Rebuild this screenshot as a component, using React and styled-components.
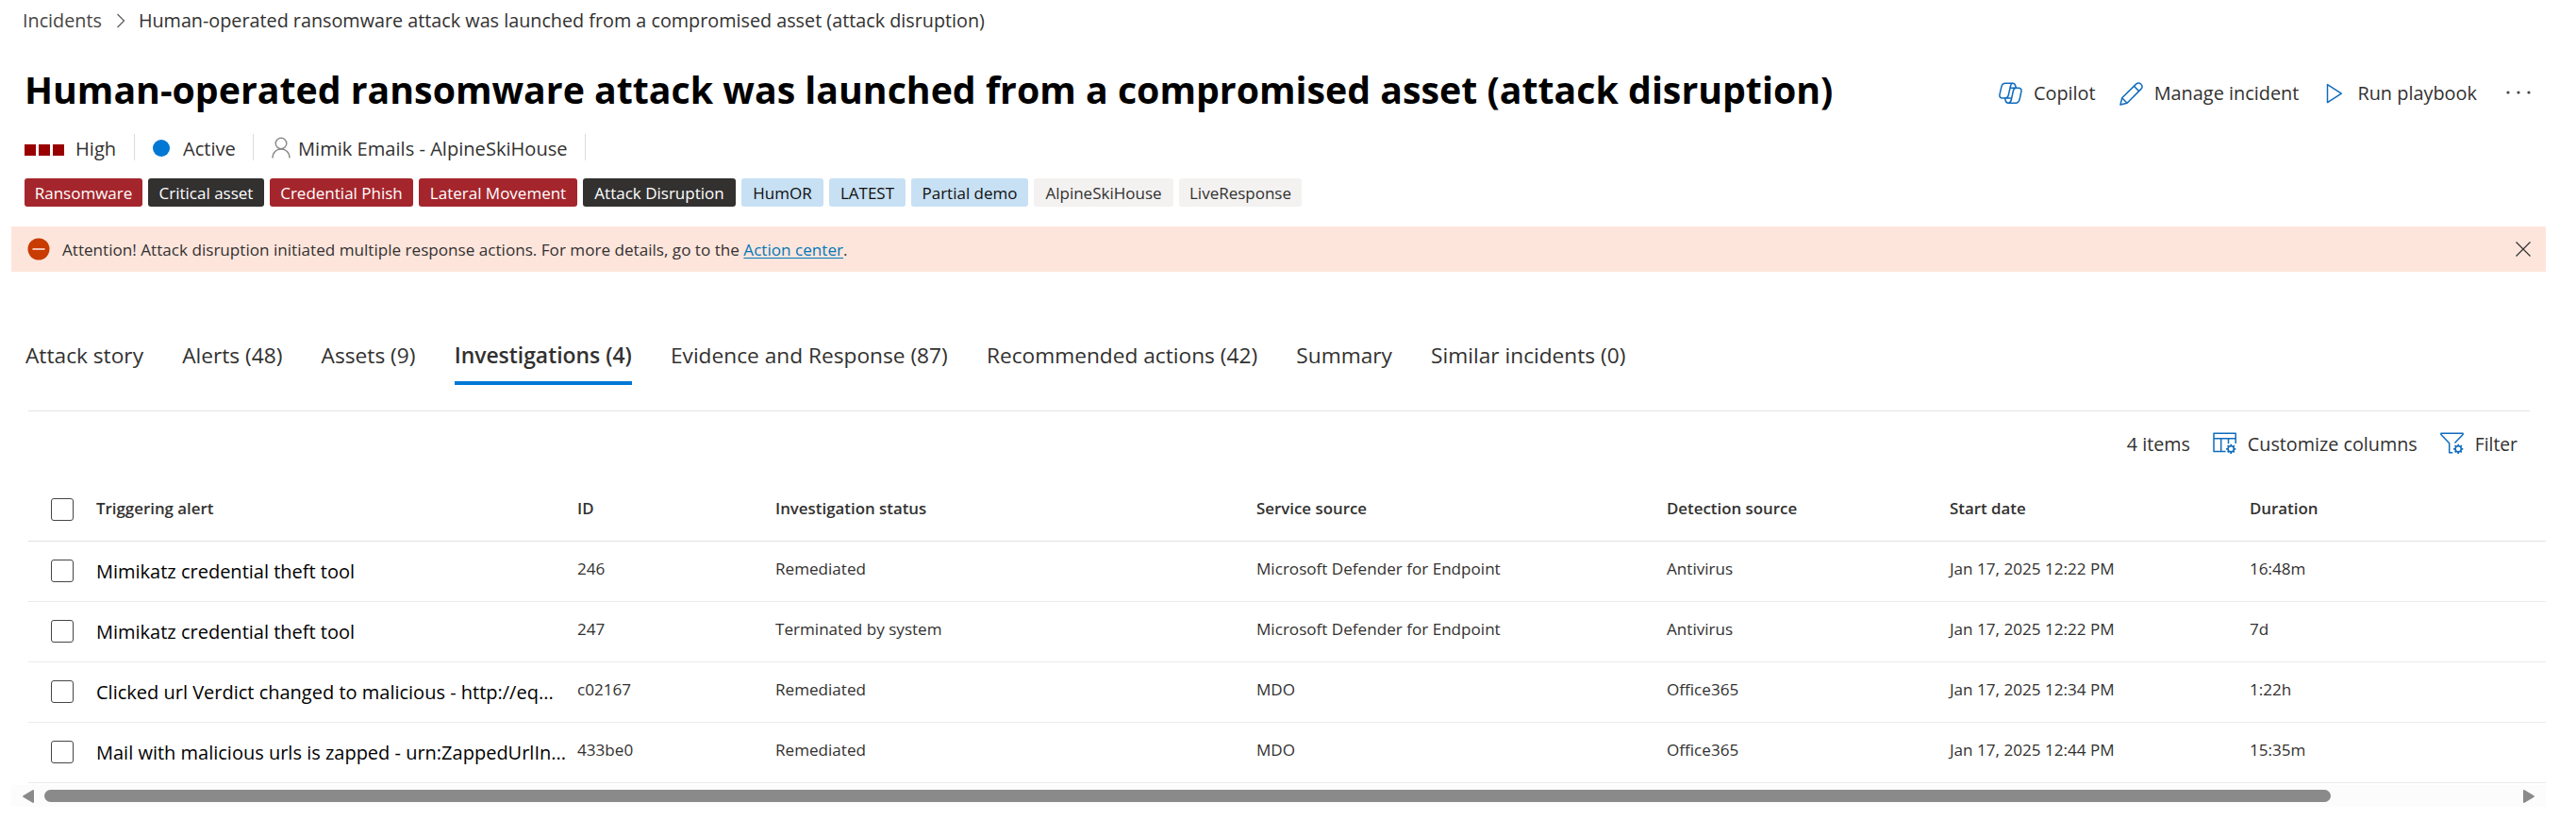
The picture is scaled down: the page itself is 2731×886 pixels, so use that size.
import React from "react";
import styled, { createGlobalStyle } from "styled-components";

const GlobalStyle = createGlobalStyle`
  body { margin: 0; background: #fff; color: #323130; font-family: "Open Sans", "Noto Sans", sans-serif; }
  * { box-sizing: border-box; }
`;

const Page = styled.main`
  width: 2731px;
  height: 886px;
  overflow: hidden;
  display: flex;
  flex-direction: column;
  white-space: nowrap;
`;

const Breadcrumb = styled.nav`
  display: flex;
  align-items: center;
  height: 44px;
  padding: 0 0 0 24px;
  font-size: 19.77px;
  line-height: 44px;
`;
const Crumb = styled.span`
  color: ${(p) => (p.$current ? "#323130" : "#484644")};
`;
const CrumbChevron = styled.svg`
  width: 10px;
  height: 16px;
  margin: 0 14px 0 15px;
  fill: none;
  stroke: #605e5c;
  stroke-width: 1.3;
`;

const TitleBar = styled.header`
  display: flex;
  align-items: center;
  height: 96px;
  padding: 4px 48px 0 26px;
`;
const Title = styled.h1`
  flex: 1;
  margin: 2px 0 0;
  color: #000;
  font-size: 39.27px;
  font-weight: 700;
  line-height: 54px;
`;
const Actions = styled.div`
  display: flex;
  align-items: center;
  padding-top: 10px;
`;
const Action = styled.button`
  display: flex;
  align-items: center;
  gap: ${(p) => p.$gap}px;
  margin: 0 0 0 ${(p) => p.$before}px;
  padding: 0;
  border: 0;
  background: none;
  color: #323130;
  font: inherit;
  font-size: ${(p) => p.$size || 19.9}px;
  line-height: 30px;
`;
const LineIcon = styled.svg`
  flex: none;
  width: ${(p) => p.$w || 25}px;
  height: 25px;
  fill: none;
  stroke: #0f6cbd;
  stroke-width: 1.5;
  stroke-linejoin: round;
`;
const MoreDots = styled.svg`
  width: 26px;
  height: 6px;
  margin-left: 31px;
  fill: #484644;
`;

const MetaRow = styled.div`
  display: flex;
  align-items: center;
  height: 30px;
  margin-top: 1px;
  padding: 0 25px;
  font-size: 20.1px;
  line-height: 30px;
`;
const MetaItem = styled.div`
  display: flex;
  align-items: center;
  width: ${(p) => p.$w}px;
  height: 28px;
  border-right: 1px solid #dcdbda;
`;
const MetaText = styled.span`
  padding-top: 3px;
`;
const SeverityBars = styled.span`
  display: flex;
  gap: 3px;
  margin: 6px 12px 0 1px;
`;
const SeverityBar = styled.i`
  width: 12px;
  height: 12px;
  background: #990000;
`;
const StatusDot = styled.i`
  width: 18px;
  height: 18px;
  margin: 2px 14px 0 19px;
  border-radius: 50%;
  background: #0078d4;
`;
const PersonIcon = styled.svg`
  width: 20px;
  height: 23px;
  margin: 0 8px 0 19px;
  fill: none;
  stroke: #8a8886;
  stroke-width: 1.4;
`;

const TagRow = styled.div`
  display: flex;
  gap: 6px;
  height: 30px;
  margin-top: 18px;
  padding-left: 26px;
`;
const tagTones = {
  danger: ["#a4262c", "#fff"],
  dark: ["#323130", "#fff"],
  info: ["#c7e0f4", "#11100f"],
  plain: ["#f3f2f1", "#323130"],
};
const Tag = styled.span`
  width: ${(p) => p.$w}px;
  border-radius: 3px;
  background: ${(p) => tagTones[p.$tone][0]};
  color: ${(p) => tagTones[p.$tone][1]};
  font-size: 17px;
  line-height: 31px;
  text-align: center;
`;

const Banner = styled.div`
  display: flex;
  align-items: center;
  height: 48px;
  margin: 21px 32px 0 12px;
  padding: 0 16px 0 17px;
  background: #fee5dc;
  font-size: 17.13px;
  line-height: 48px;
`;
const BannerIcon = styled.svg`
  width: 24px;
  height: 24px;
  margin: 0 13px 0 0;
`;
const BannerText = styled.span`
  flex: 1;
  padding-top: 1px;
`;
const BannerLink = styled.a`
  color: #0078b8;
  text-decoration: underline;
  text-underline-offset: 2px;
  text-decoration-thickness: 1px;
`;
const CloseIcon = styled.svg`
  width: 16px;
  height: 16px;
  stroke: #323130;
  stroke-width: 1.2;
`;

const TabStrip = styled.section`
  margin: 0 49px 0 30px;
  border-bottom: 1px solid #e3e2e1;
`;
const Tabs = styled.div`
  display: flex;
  gap: 41.2px;
  height: 78px;
  margin: 69px 0 0 -3px;
`;
const Tab = styled.button`
  height: 51px;
  padding: 0 0 7px;
  border: 0;
  border-bottom: 4px solid ${(p) => (p.$active ? "#0078d4" : "transparent")};
  background: none;
  color: #323130;
  font: inherit;
  font-size: ${(p) => (p.$active ? 22.9 : 22.7)}px;
  font-weight: ${(p) => (p.$active ? 600 : 400)};
  line-height: 40px;
`;

const Toolbar = styled.div`
  display: flex;
  align-items: center;
  justify-content: flex-end;
  height: 68px;
  padding: 1px 62px 0 0;
  font-size: 19.7px;
`;

const Table = styled.div`
  width: 2669px;
  margin-left: 30px;
`;
const Row = styled.div`
  display: grid;
  grid-template-columns: 72px 510px 210px 510px 435px 300px 318px 314px;
  align-items: center;
  height: ${(p) => (p.$head ? 70 : 64)}px;
  border-bottom: 1px solid ${(p) => (p.$head ? "#e1dfdd" : "#edebe9")};
`;
const Check = styled.span`
  width: 24px;
  height: 24px;
  margin: ${(p) => (p.$head ? "3px 0 0" : "0 0 1px")} 24px;
  border: 1.4px solid #484644;
  border-radius: 3px;
`;
const HeadCell = styled.span`
  padding-top: 1px;
  font-size: 16.87px;
  font-weight: 600;
  line-height: 26px;
`;
const AlertName = styled.span`
  width: 499px;
  overflow: hidden;
  color: #000;
  font-size: 20px;
  line-height: 30px;
  padding-top: 1px;
`;
const Cell = styled.span`
  margin-bottom: 6px;
  font-size: 17.1px;
  line-height: 26px;
`;

const Scrollbar = styled.div`
  display: flex;
  align-items: center;
  height: 23px;
  margin: 2px 32px 0 12px;
  padding: 0 12px;
  background: #fcfcfc;
`;
const ScrollArrow = styled.svg`
  width: 12px;
  height: 14px;
  fill: #8a8a8a;
`;
const ScrollTrack = styled.div`
  flex: 1;
  padding-left: 11px;
`;
const ScrollThumb = styled.div`
  width: 2424px;
  height: 13px;
  border-radius: 6.5px;
  background: #8a8a8a;
`;

const GearMark = () => (
  <g>
    <circle cx="19.2" cy="17.8" r="3.1" strokeWidth="1.6" />
    <path strokeWidth="1.7" d="M19.2 12.7v2M19.2 20.900v2M24.3 17.8h-2M16.1 17.8h-2M22.8 14.200l-1.400 1.400M17 20l-1.400 1.400M22.8 21.400l-1.400-1.400M17 15.600l-1.400-1.400" />
  </g>
);

const tags = [
  ["Ransomware", "danger", 125],
  ["Critical asset", "dark", 123],
  ["Credential Phish", "danger", 152],
  ["Lateral Movement", "danger", 168],
  ["Attack Disruption", "dark", 162],
  ["HumOR", "info", 87],
  ["LATEST", "info", 81],
  ["Partial demo", "info", 124],
  ["AlpineSkiHouse", "plain", 148],
  ["LiveResponse", "plain", 130],
];
const tabs = [
  "Attack story",
  "Alerts (48)",
  "Assets (9)",
  "Investigations (4)",
  "Evidence and Response (87)",
  "Recommended actions (42)",
  "Summary",
  "Similar incidents (0)",
];
const heads = ["Triggering alert", "ID", "Investigation status", "Service source", "Detection source", "Start date", "Duration"];
const rows = [
  ["Mimikatz credential theft tool", "246", "Remediated", "Microsoft Defender for Endpoint", "Antivirus", "Jan 17, 2025 12:22 PM", "16:48m"],
  ["Mimikatz credential theft tool", "247", "Terminated by system", "Microsoft Defender for Endpoint", "Antivirus", "Jan 17, 2025 12:22 PM", "7d"],
  ["Clicked url Verdict changed to malicious - http://eq...", "c02167", "Remediated", "MDO", "Office365", "Jan 17, 2025 12:34 PM", "1:22h"],
  ["Mail with malicious urls is zapped - urn:ZappedUrlIn...", "433be0", "Remediated", "MDO", "Office365", "Jan 17, 2025 12:44 PM", "15:35m"],
];

export default function App() {
  return (
    <Page>
      <GlobalStyle />
      <Breadcrumb>
        <Crumb>Incidents</Crumb>
        <CrumbChevron viewBox="0 0 10 16"><path d="M1.5 1l7 7-7 7" /></CrumbChevron>
        <Crumb $current>Human-operated ransomware attack was launched from a compromised asset (attack disruption)</Crumb>
      </Breadcrumb>

      <TitleBar>
        <Title>Human-operated ransomware attack was launched from a compromised asset (attack disruption)</Title>
        <Actions>
          <Action $gap={12} $before={0}>
            <LineIcon viewBox="0 0 25 25">
              <path d="M7 17H4C1.600 17 .6 15.500 1 13.200L2.900 4.800C3.500 2.200 4.700 1.200 7.200 1.200H14.800C16.800 1.200 17.400 2.300 17.800 4L18.300 6.200" />
              <path d="M16.500 6.200H20.800C23.300 6.200 24.400 7.600 23.900 10L22.200 18C21.600 20.800 20.300 22.200 17.800 22.200H10.200C8.200 22.200 7.600 21.200 7.200 19.500L6.600 17" />
              <path d="M14.500 1.300C13 1.700 12.700 3 12.400 4.500L10.400 13.500C9.800 16.200 8.800 17 6.500 17M18.300 6.200C16.400 6.300 15.700 7.500 15.300 9.500L13.500 18C13 20.600 12.300 21.900 10.500 22.200M12.300 6.200H17M7 17H13.500" />
            </LineIcon>
            Copilot
          </Action>
          <Action $gap={12} $before={25}>
            <LineIcon viewBox="0 0 25 25">
              <path d="M1 24l1.700-7.200L17.900 1.900a3.700 3.700 0 0 1 5.200 5.200L8.100 22.300zM15.400 4.300l5.300 5.300M2.700 16.800l5.400 5.500" />
            </LineIcon>
            Manage incident
          </Action>
          <Action $gap={15} $before={29}>
            <LineIcon $w={18} viewBox="0 0 18 25"><path d="M1.500 2.600v19L16.300 12.100z" /></LineIcon>
            Run playbook
          </Action>
          <MoreDots viewBox="0 0 26 6"><circle cx="2" cy="2" r="1.600" /><circle cx="13" cy="2" r="1.600" /><circle cx="24" cy="2" r="1.600" /></MoreDots>
        </Actions>
      </TitleBar>

      <MetaRow>
        <MetaItem $w={118}>
          <SeverityBars><SeverityBar /><SeverityBar /><SeverityBar /></SeverityBars>
          <MetaText>High</MetaText>
        </MetaItem>
        <MetaItem $w={126}><StatusDot /><MetaText>Active</MetaText></MetaItem>
        <MetaItem $w={352}>
          <PersonIcon viewBox="0 0 20 23"><circle cx="10" cy="7" r="5.800" /><path d="M1 22.500c0-6 4-9.500 9-9.500s9 3.500 9 9.500" /></PersonIcon>
          <MetaText>Mimik Emails - AlpineSkiHouse</MetaText>
        </MetaItem>
      </MetaRow>

      <TagRow>
        {tags.map(([label, tone, w]) => <Tag key={label} $tone={tone} $w={w}>{label}</Tag>)}
      </TagRow>

      <Banner>
        <BannerIcon viewBox="0 0 24 24"><circle cx="12" cy="12" r="11.500" fill="#c83b01" /><path d="M5.500 12h13" stroke="#fee5dc" strokeWidth="1.600" /></BannerIcon>
        <BannerText>
          Attention! Attack disruption initiated multiple response actions. For more details, go to the <BannerLink>Action center</BannerLink>.
        </BannerText>
        <CloseIcon viewBox="0 0 16 16"><path d="M.5.5l15 15M15.500.5l-15 15" /></CloseIcon>
      </Banner>

      <TabStrip>
        <Tabs>
          {tabs.map((t) => <Tab key={t} $active={t.startsWith("Investigations")}>{t}</Tab>)}
        </Tabs>
      </TabStrip>

      <Toolbar>
        4 items
        <Action $gap={12} $before={24} $size={19.76}>
          <LineIcon viewBox="0 0 25 25">
            <path d="M13.500 20.500H1V1.200h23.200V12M1 6.800h23.200M8.700 6.800v13.700M16.500 6.800v5.500" />
            <GearMark />
          </LineIcon>
          Customize columns
        </Action>
        <Action $gap={12} $before={24} $size={19.3}>
          <LineIcon viewBox="0 0 25 25">
            <path d="M13.300 21.800h-3.600V11.800L.9 2.500V1.200h23.200v1.300L15.500 11.600" />
            <GearMark />
          </LineIcon>
          Filter
        </Action>
      </Toolbar>

      <Table>
        <Row $head>
          <Check $head />
          {heads.map((h) => <HeadCell key={h}>{h}</HeadCell>)}
        </Row>
        {rows.map(([name, ...cells]) => (
          <Row key={cells[0]}>
            <Check />
            <AlertName>{name}</AlertName>
            {cells.map((c, i) => <Cell key={i}>{c}</Cell>)}
          </Row>
        ))}
      </Table>

      <Scrollbar>
        <ScrollArrow viewBox="0 0 12 14"><path d="M11 0Q12 0 12 1v12q0 1-1 1L.5 7.700q-.6-.7 0-1.400z" /></ScrollArrow>
        <ScrollTrack><ScrollThumb /></ScrollTrack>
        <ScrollArrow viewBox="0 0 12 14"><path d="M1 0Q0 0 0 1v12q0 1 1 1L11.500 7.700q.6-.7 0-1.400z" /></ScrollArrow>
      </Scrollbar>
    </Page>
  );
}
